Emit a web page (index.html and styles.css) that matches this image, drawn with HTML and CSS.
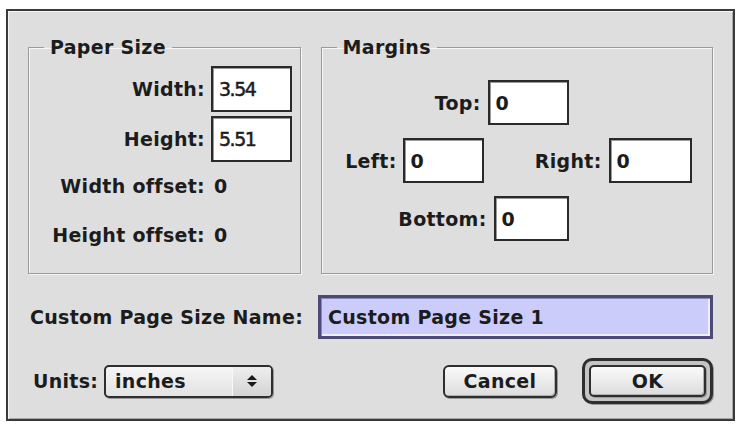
FILE: index.html
```html
<!DOCTYPE html>
<html lang="en">
<head>
    <meta charset="UTF-8">
    <title>Custom Page Size</title>
    <link rel="stylesheet" href="styles.css">
</head>
<body>
    <div class="dialog">
        <div class="groups">
            <fieldset class="group paper">
                <legend>Paper Size</legend>
                <div class="paper-grid">
                    <span class="label">Width:</span>
                    <div class="field num">3.54</div>
                    <span class="label">Height:</span>
                    <div class="field num">5.51</div>
                    <span class="label">Width offset:</span>
                    <span class="value">0</span>
                    <span class="label">Height offset:</span>
                    <span class="value">0</span>
                </div>
            </fieldset>

            <fieldset class="group margins">
                <legend>Margins</legend>
                <div class="m-row m-top">
                    <span class="label">Top:</span>
                    <div class="field">0</div>
                </div>
                <div class="m-row m-mid">
                    <span class="label lbl-left">Left:</span>
                    <div class="field">0</div>
                    <span class="label lbl-right">Right:</span>
                    <div class="field">0</div>
                </div>
                <div class="m-row m-bottom">
                    <span class="label">Bottom:</span>
                    <div class="field narrow">0</div>
                </div>
            </fieldset>
        </div>

        <div class="name-row">
            <span class="label name-label">Custom Page Size Name:</span>
            <div class="name-field">Custom Page Size 1</div>
        </div>

        <div class="action-row">
            <span class="label units-label">Units:</span>
            <div class="popup">
                <span class="popup-text">inches</span>
                <span class="popup-arrows">
                    <svg width="12" height="14" viewBox="0 0 12 14">
                        <path d="M6 1 L11 6 L1 6 Z" fill="#1a1a1a"/>
                        <path d="M1 8 L11 8 L6 13 Z" fill="#1a1a1a"/>
                    </svg>
                </span>
            </div>
            <div class="spacer"></div>
            <button class="btn cancel">Cancel</button>
            <div class="default-ring">
                <button class="btn ok">OK</button>
            </div>
        </div>
    </div>
</body>
</html>
```

FILE: styles.css
```css
body {
    margin: 0;
    background: #ffffff;
    font-family: "DejaVu Sans", Verdana, sans-serif;
    font-weight: bold;
    font-size: 19px;
    letter-spacing: 0.3px;
    color: #1c1c1c;
}
.dialog {
    box-sizing: border-box;
    width: 729px;
    height: 412px;
    margin: 9px 0 0 6px;
    padding: 25px 20px 0 20px;
    background: #dedede;
    border: 2px solid #3a3a3a;
    box-shadow: inset 1px 1px 0 #f4f4f4, inset -1px -1px 0 #a8a8a8;
}
.groups {
    display: flex;
    gap: 20px;
}
.group {
    box-sizing: border-box;
    margin: 0;
    padding: 8px 0 0 0;
    height: 238px;
    border: 1px solid #9a9a9a;
    box-shadow: 1px 1px 0 #f6f6f6, inset 1px 1px 0 #f6f6f6;
}
.group legend {
    margin-left: 15px;
    padding: 0 6px;
    line-height: 22px;
}
.paper {
    width: 273px;
}
.margins {
    width: 393px;
    padding-top: 22px;
}
.label {
    white-space: nowrap;
}
.field {
    box-sizing: border-box;
    width: 81px;
    height: 45px;
    padding: 0 6px;
    display: flex;
    align-items: center;
    background: #ffffff;
    border: 2px solid #2a2a2a;
    box-shadow: inset 1px 1px 0 #9a9a9a;
}
.field.num {
    letter-spacing: -1.5px;
    font-weight: normal;
    -webkit-text-stroke: 0.5px #1c1c1c;
}
.field.narrow {
    width: 75px;
}
.paper-grid {
    display: grid;
    grid-template-columns: 176px 81px;
    grid-template-rows: 46px 46px 40px 50px;
    column-gap: 6px;
    row-gap: 4px;
    align-items: center;
}
.paper-grid .label {
    text-align: right;
}
.paper-grid .field {
    height: 46px;
}
.value {
    padding-left: 3px;
}
.m-row {
    display: flex;
    align-items: center;
}
.m-row .label {
    text-align: right;
    margin-right: 7px;
}
.m-top .label {
    width: 100px;
    margin-left: 59px;
}
.m-mid {
    margin-top: 13px;
}
.m-mid .lbl-left {
    width: 70px;
    margin-left: 5px;
    margin-right: 6px;
}
.m-mid .lbl-right {
    width: 100px;
    margin-left: 18px;
}
.m-mid .field:last-child {
    width: 83px;
}
.m-bottom {
    margin-top: 13px;
}
.m-bottom .label {
    width: 140px;
    margin-left: 25px;
}
.name-row {
    display: flex;
    align-items: center;
    margin-top: 21px;
}
.name-label {
    width: 288px;
    margin-left: 2px;
}
.name-field {
    box-sizing: border-box;
    width: 395px;
    height: 44px;
    padding: 0 7px;
    display: flex;
    align-items: center;
    background: #ccccfa;
    border: 3px solid #4e4a78;
    box-shadow: inset 1px 1px 0 #8a86b8, inset -2px -2px 0 #eeeeff;
}
.action-row {
    display: flex;
    align-items: center;
    margin-top: 19px;
}
.units-label {
    margin-left: 5px;
    width: 71px;
}
.popup {
    box-sizing: border-box;
    width: 169px;
    height: 33px;
    display: flex;
    align-items: stretch;
    border: 2px solid #2e2e2e;
    border-radius: 5px;
    background: linear-gradient(#f6f6f6, #e2e2e2);
    box-shadow: 1px 1px 0 #9a9a9a;
}
.popup-text {
    flex: 1;
    display: flex;
    align-items: center;
    padding-left: 9px;
}
.popup-arrows {
    width: 38px;
    display: flex;
    align-items: center;
    justify-content: center;
    border-left: 1px solid #f8f8f8;
    background: linear-gradient(#eeeeee, #d4d4d4);
    border-radius: 0 3px 3px 0;
}
.spacer {
    flex: 1;
}
.btn {
    box-sizing: border-box;
    font: inherit;
    letter-spacing: inherit;
    color: #1c1c1c;
    height: 33px;
    border: 2px solid #2e2e2e;
    border-radius: 6px;
    background: linear-gradient(#fafafa, #dcdcdc);
    box-shadow: inset -1px -1px 0 #b0b0b0, 1px 1px 0 #9a9a9a;
    padding: 0;
}
.cancel {
    width: 114px;
    margin-right: 25px;
}
.default-ring {
    box-sizing: border-box;
    width: 131px;
    height: 46px;
    padding: 4px;
    border: 3px solid #2e2e2e;
    border-radius: 10px;
    background: #c4c4c4;
    box-shadow: 1px 1px 0 #9a9a9a;
}
.ok {
    width: 100%;
    height: 100%;
    border-radius: 5px;
}
```
